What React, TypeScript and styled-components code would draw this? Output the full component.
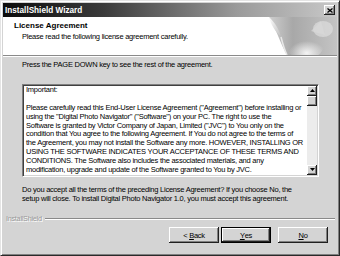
import React from "react";
import styled, { createGlobalStyle } from "styled-components";

const GlobalStyle = createGlobalStyle`
  html, body {
    margin: 0;
    padding: 0;
    background: #d4d4d4;
  }
  body {
    font-family: "Liberation Sans", Arial, sans-serif;
  }
`;

const Window = styled.div`
  width: 340px;
  height: 256px;
  box-sizing: border-box;
  background: #d4d4d4;
  border: 1px solid #e4e4e4;
  border-right-color: #2a2a2a;
  border-bottom-color: #2a2a2a;
  box-shadow: inset 1px 1px 0 #ffffff, inset -1px -1px 0 #808080;
  padding: 2px;
  display: flex;
  flex-direction: column;
  font-size: 7.5px;
  letter-spacing: -0.24px;
  color: #000;
`;

const TitleBar = styled.div`
  height: 14px;
  display: flex;
  align-items: center;
  justify-content: space-between;
  padding: 0 2px 0 2px;
  background: linear-gradient(to right, #0c0c0c 0%, #3a3a3a 30%, #9a9a9a 70%, #c8c8c8 100%);
`;

const Title = styled.span`
  color: #fff;
  font-weight: bold;
  font-size: 8.2px;
  letter-spacing: 0;
`;

const CloseButton = styled.div`
  width: 11px;
  height: 10px;
  background: #d4d4d4;
  box-shadow: inset -1px -1px 0 #202020, inset 1px 1px 0 #ffffff, inset -2px -2px 0 #808080;
  display: flex;
  align-items: center;
  justify-content: center;
`;

const Header = styled.div`
  height: 38px;
  background: #fff;
  display: flex;
  justify-content: space-between;
  align-items: stretch;
`;

const HeaderText = styled.div`
  padding: 4px 0 0 11px;
  display: flex;
  flex-direction: column;
  gap: 2px;
`;

const HeaderTitle = styled.div`
  font-weight: bold;
  font-size: 8px;
  letter-spacing: 0;
  line-height: 9px;
`;

const HeaderSub = styled.div`
  padding-left: 8px;
  line-height: 9px;
`;

const Etched = styled.div`
  height: 0;
  border-top: 1px solid #8a8a8a;
  border-bottom: 1px solid #ffffff;
`;

const Body = styled.div`
  padding: 4px 0 0 19px;
  display: flex;
  flex-direction: column;
`;

const Line = styled.div`
  line-height: 8.9px;
  white-space: nowrap;
`;

const LicenseBox = styled.div`
  margin-top: 14px;
  width: 297px;
  height: 93px;
  box-sizing: border-box;
  background: #fff;
  border: 1px solid #808080;
  border-right-color: #ffffff;
  border-bottom-color: #ffffff;
  box-shadow: inset 1px 1px 0 #404040, inset -1px -1px 0 #d4d4d4;
  display: flex;
`;

const LicenseText = styled.div`
  flex: 1;
  padding: 1px 0 0 3px;
  overflow: hidden;
`;

const ScrollBar = styled.div`
  width: 10px;
  margin: 1px 1px 1px 0;
  display: flex;
  flex-direction: column;
  background: #ececec;
`;

const ScrollPart = styled.div<{ $h: number }>`
  height: ${({ $h }) => $h}px;
  flex: none;
  background: #d4d4d4;
  box-sizing: border-box;
  box-shadow: inset -1px -1px 0 #202020, inset 1px 1px 0 #ffffff, inset -2px -2px 0 #808080;
  display: flex;
  align-items: center;
  justify-content: center;
`;

const Track = styled.div`
  flex: 1;
`;

const Question = styled.div`
  margin-top: 9px;
`;

const Footer = styled.div`
  margin-top: auto;
  padding: 0 2px 10px 3px;
  display: flex;
  flex-direction: column;
`;

const BrandRow = styled.div`
  display: flex;
  align-items: center;
  gap: 3px;
  height: 9px;
`;

const Brand = styled.span`
  color: #9a9a9a;
  text-shadow: 1px 1px 0 #ffffff;
  font-size: 7.2px;
`;

const BrandLine = styled.div`
  flex: 1;
  border-top: 1px solid #8a8a8a;
  border-bottom: 1px solid #ffffff;
`;

const ButtonRow = styled.div`
  margin-top: 4px;
  display: flex;
  justify-content: flex-end;
  padding-right: 7px;
`;

const Button = styled.div<{ $default?: boolean; $gap?: number }>`
  width: 50px;
  height: 16px;
  box-sizing: border-box;
  margin-left: ${({ $gap }) => $gap ?? 0}px;
  display: flex;
  align-items: center;
  justify-content: center;
  background: #d4d4d4;
  border: ${({ $default }) => ($default ? "1px solid #000" : "none")};
  box-shadow: inset -1px -1px 0 #202020, inset 1px 1px 0 #ffffff, inset -2px -2px 0 #808080;
  font-size: 7.5px;
`;

const Key = styled.span`
  text-decoration: underline;
`;

function PageCurl() {
  return (
    <svg width="76" height="38" viewBox="0 0 76 38">
      <defs>
        <linearGradient id="sheet" x1="0" y1="0" x2="1" y2="0">
          <stop offset="0" stopColor="#cfcfcf" />
          <stop offset="0.35" stopColor="#a8a8a8" />
          <stop offset="1" stopColor="#c4c4c4" />
        </linearGradient>
        <radialGradient id="glow" cx="0.55" cy="0.75" r="0.5">
          <stop offset="0" stopColor="#f4f4f4" />
          <stop offset="1" stopColor="#f4f4f4" stopOpacity="0" />
        </radialGradient>
        <linearGradient id="curl" x1="0" y1="0" x2="1" y2="1">
          <stop offset="0" stopColor="#ffffff" />
          <stop offset="1" stopColor="#bdbdbd" />
        </linearGradient>
      </defs>
      <path d="M8 0 L76 0 L76 38 L26 38 C20 28 16 14 8 0 Z" fill="url(#sheet)" />
      <ellipse cx="44" cy="30" rx="18" ry="12" fill="url(#glow)" />
      <ellipse cx="62" cy="12" rx="10" ry="8" fill="#e2e2e2" opacity="0.6" />
      <path d="M50 14 L60 4 L64 18 Z" fill="#d8d8d8" opacity="0.7" />
      <path d="M8 0 C14 6 18 12 20 20 C14 14 10 8 8 0 Z" fill="url(#curl)" />
      <path d="M20 20 C22 28 24 34 26 38" stroke="#e8e8e8" strokeWidth="1.5" fill="none" />
    </svg>
  );
}

function Arrow({ up }: { up?: boolean }) {
  return (
    <svg width="5" height="3" viewBox="0 0 5 3">
      <path d={up ? "M2.5 0 L5 3 L0 3 Z" : "M0 0 L5 0 L2.5 3 Z"} fill="#000" />
    </svg>
  );
}

const licenseLines = [
  "Important:",
  "\u00a0",
  "Please carefully read this End-User License Agreement (\"Agreement\") before installing or",
  "using the \"Digital Photo Navigator\" (\"Software\") on your PC.  The right to use the",
  "Software is granted by Victor Company of Japan, Limited (\"JVC\") to You only on the",
  "condition that You agree to the following Agreement.  If You do not agree to the terms of",
  "the Agreement, you may not install the Software any more.  HOWEVER, INSTALLING OR",
  "USING THE SOFTWARE INDICATES YOUR ACCEPTANCE OF THESE TERMS AND",
  "CONDITIONS.  The Software also includes the associated materials, and any",
  "modification, upgrade and update of the Software granted to You by JVC.",
];

export default function App() {
  return (
    <>
      <GlobalStyle />
      <Window>
        <TitleBar>
          <Title>InstallShield Wizard</Title>
          <CloseButton>
            <svg width="6" height="5" viewBox="0 0 6 5">
              <path d="M0.5 0.5 L5.5 4.5 M5.5 0.5 L0.5 4.5" stroke="#000" strokeWidth="1.3" />
            </svg>
          </CloseButton>
        </TitleBar>
        <Header>
          <HeaderText>
            <HeaderTitle>License Agreement</HeaderTitle>
            <HeaderSub>Please read the following license agreement carefully.</HeaderSub>
          </HeaderText>
          <PageCurl />
        </Header>
        <Etched />
        <Body>
          <Line>Press the PAGE DOWN key to see the rest of the agreement.</Line>
          <LicenseBox>
            <LicenseText>
              {licenseLines.map((l, i) => (
                <Line key={i}>{l}</Line>
              ))}
            </LicenseText>
            <ScrollBar>
              <ScrollPart $h={10}>
                <Arrow up />
              </ScrollPart>
              <ScrollPart $h={10} />
              <Track />
              <ScrollPart $h={10}>
                <Arrow />
              </ScrollPart>
            </ScrollBar>
          </LicenseBox>
          <Question>
            <Line>Do you accept all the terms of the preceding License Agreement?  If you choose No,  the</Line>
            <Line>setup will close.  To install Digital Photo Navigator 1.0, you must accept this agreement.</Line>
          </Question>
        </Body>
        <Footer>
          <BrandRow>
            <Brand>InstallShield</Brand>
            <BrandLine />
          </BrandRow>
          <ButtonRow>
            <Button>
              &lt;&nbsp;<Key>B</Key>ack
            </Button>
            <Button $default $gap={2}>
              <Key>Y</Key>es
            </Button>
            <Button $gap={7}>
              <Key>N</Key>o
            </Button>
          </ButtonRow>
        </Footer>
      </Window>
    </>
  );
}
